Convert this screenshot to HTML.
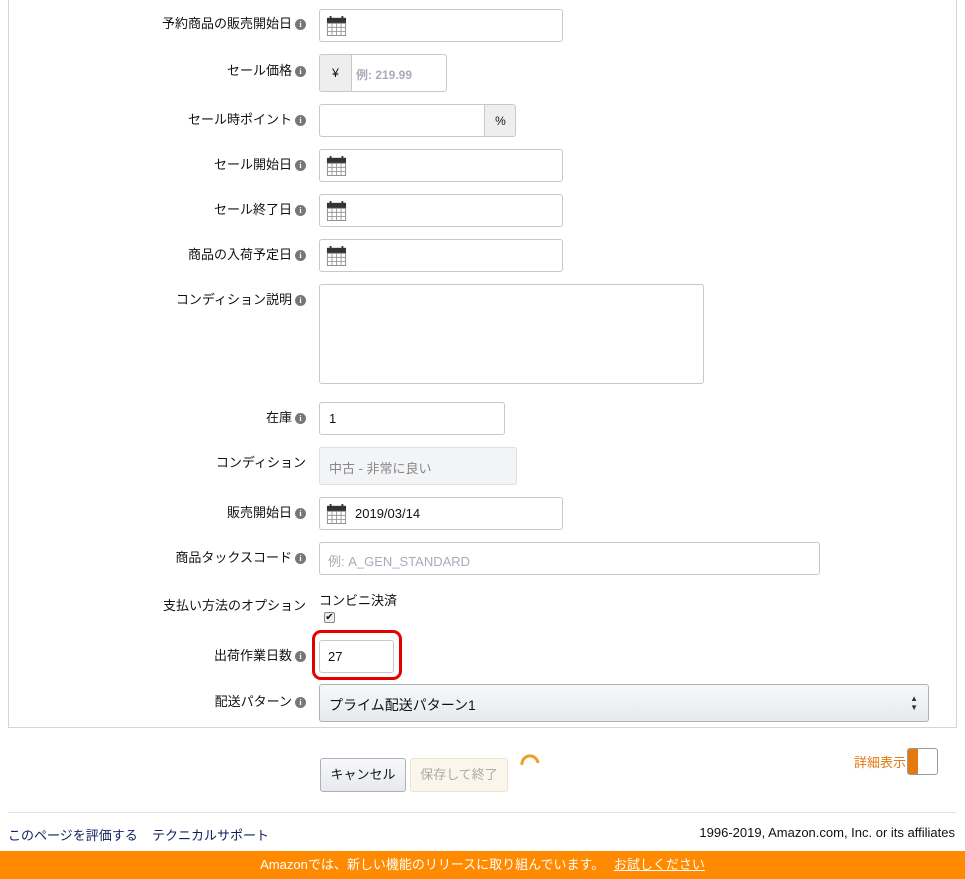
<!DOCTYPE html>
<html><head><meta charset="utf-8"><style>
*{box-sizing:border-box;margin:0;padding:0}
body{width:965px;height:879px;position:relative;background:#fff;font-family:"Liberation Sans","Noto Sans CJK JP",sans-serif;font-size:13px;color:#111;overflow:hidden}
.a{position:absolute}
.lbl{position:absolute;right:659px;text-align:right;white-space:nowrap;font-size:13px;color:#111;margin-top:-2px}
.lbl.i{right:673px}
.ic{position:absolute;width:11px;height:11px;border-radius:50%;background:#777;color:#fff;font:bold 8px/11px "Liberation Serif",serif;text-align:center;left:295px;margin-top:1px}
.in{position:absolute;border:1px solid #c8c8c8;border-radius:3px;background:#fff}
.cal{position:absolute;left:6px;top:6px;width:21px;height:20px}
.txt{position:absolute;font-size:13px}
</style></head><body>
<div class="a" style="left:8px;top:-2px;width:949px;height:730px;border:1px solid #d5d5d5;border-top:none"></div>

<svg width="0" height="0" style="position:absolute"><defs><g id="c"><rect x="0" y="0" width="21" height="6" fill="#333"/><rect x="3" y="-2" width="2" height="4" fill="#333"/><rect x="16" y="-2" width="2" height="4" fill="#333"/><rect x="0.5" y="6" width="20" height="13.5" fill="#fff" stroke="#888"/><path d="M5.5 6v14M10.5 6v14M15.5 6v14M0 10.5h21M0 15h21" stroke="#999" stroke-width="1"/></g></defs></svg>

<div class="lbl i" style="top:15px">予約商品の販売開始日</div><div class="ic" style="top:18px">i</div>
<div class="in" style="left:319px;top:9px;width:244px;height:33px"><svg class="cal" viewBox="0 -2 21 22"><use href="#c"/></svg></div>

<div class="lbl i" style="top:62px">セール価格</div><div class="ic" style="top:65px">i</div>
<div class="in" style="left:319px;top:54px;width:128px;height:38px;overflow:hidden"><div class="a" style="left:0;top:0;width:32px;height:38px;background:#eee;border-right:1px solid #c8c8c8;text-align:center;line-height:36px;font-size:12px">¥</div><div class="txt" style="left:36px;top:11px;color:#aab;font-weight:bold;font-size:12px">例: 219.99</div></div>

<div class="lbl i" style="top:111px">セール時ポイント</div><div class="ic" style="top:114px">i</div>
<div class="in" style="left:319px;top:104px;width:197px;height:33px;overflow:hidden"><div class="a" style="left:164px;top:0;width:32px;height:33px;background:#eee;border-left:1px solid #c8c8c8;text-align:center;line-height:32px;font-size:12px">%</div></div>

<div class="lbl i" style="top:156px">セール開始日</div><div class="ic" style="top:159px">i</div>
<div class="in" style="left:319px;top:149px;width:244px;height:33px"><svg class="cal" viewBox="0 -2 21 22"><use href="#c"/></svg></div>
<div class="lbl i" style="top:201px">セール終了日</div><div class="ic" style="top:204px">i</div>
<div class="in" style="left:319px;top:194px;width:244px;height:33px"><svg class="cal" viewBox="0 -2 21 22"><use href="#c"/></svg></div>
<div class="lbl i" style="top:246px">商品の入荷予定日</div><div class="ic" style="top:249px">i</div>
<div class="in" style="left:319px;top:239px;width:244px;height:33px"><svg class="cal" viewBox="0 -2 21 22"><use href="#c"/></svg></div>

<div class="lbl i" style="top:291px">コンディション説明</div><div class="ic" style="top:294px">i</div>
<div class="in" style="left:319px;top:284px;width:385px;height:100px"></div>

<div class="lbl i" style="top:409px">在庫</div><div class="ic" style="top:412px">i</div>
<div class="in" style="left:319px;top:402px;width:186px;height:33px"><div class="txt" style="left:9px;top:8px">1</div></div>

<div class="lbl" style="top:454px">コンディション</div>
<div class="in" style="left:319px;top:447px;width:198px;height:38px;background:#f3f4f6;border-color:#dde"><div class="txt" style="left:9px;top:10px;color:#888">中古 - 非常に良い</div></div>

<div class="lbl i" style="top:504px">販売開始日</div><div class="ic" style="top:507px">i</div>
<div class="in" style="left:319px;top:497px;width:244px;height:33px"><svg class="cal" viewBox="0 -2 21 22"><use href="#c"/></svg><div class="txt" style="left:35px;top:8px">2019/03/14</div></div>

<div class="lbl i" style="top:549px">商品タックスコード</div><div class="ic" style="top:552px">i</div>
<div class="in" style="left:319px;top:542px;width:501px;height:33px"><div class="txt" style="left:8px;top:8px;color:#aab">例: A_GEN_STANDARD</div></div>

<div class="lbl" style="top:597px">支払い方法のオプション</div>
<div class="txt" style="left:319px;top:590px">コンビニ決済</div>
<div class="a" style="left:324px;top:612px;width:11px;height:11px;border:1px solid #888;border-radius:2px;background:#eee;font-size:10px;line-height:9px;text-align:center">✔</div>

<div class="lbl i" style="top:647px">出荷作業日数</div><div class="ic" style="top:650px">i</div>
<div class="a" style="left:312px;top:630px;width:90px;height:50px;border:3px solid #e50000;border-radius:9px"></div>
<div class="in" style="left:319px;top:640px;width:75px;height:33px"><div class="txt" style="left:8px;top:8px">27</div></div>

<div class="lbl i" style="top:693px">配送パターン</div><div class="ic" style="top:696px">i</div>
<div class="in" style="left:319px;top:684px;width:610px;height:38px;background:linear-gradient(#f7f8fa,#e7e9ec);border-color:#adb1b8"><div class="txt" style="left:9px;top:10px;font-size:14px">プライム配送パターン1</div><div class="a" style="right:10px;top:9px;font-size:8px;line-height:9px;color:#333">▲<br>▼</div></div>

<div class="a" style="left:320px;top:758px;width:86px;height:34px;border:1px solid #adb1b8;border-radius:3px;background:linear-gradient(#f7f8fa,#e7e9ec);text-align:center;line-height:32px">キャンセル</div>
<div class="a" style="left:410px;top:758px;width:98px;height:34px;border:1px solid #eee3cf;border-radius:3px;background:#fbf6ec;text-align:center;line-height:32px;color:#aaa">保存して終了</div>
<svg class="a" style="left:518px;top:753px" width="24" height="24"><path d="M4 12 A8 8 0 0 1 20 10" stroke="#f0a020" stroke-width="3" fill="none"/></svg>

<div class="a" style="left:854px;top:752px;color:#e47911">詳細表示</div>
<div class="a" style="left:907px;top:748px;width:31px;height:27px;border:1px solid #999;border-radius:3px;background:#fff;overflow:hidden"><div style="width:10px;height:27px;background:#e47911"></div></div>

<div class="a" style="left:8px;top:812px;width:948px;height:1px;background:#e3e3e3"></div>
<div class="a" style="left:8px;top:825px;color:#0f1f5f">このページを評価する</div>
<div class="a" style="left:152px;top:825px;color:#0f1f5f">テクニカルサポート</div>
<div class="a" style="right:10px;top:825px;color:#111">1996-2019, Amazon.com, Inc. or its affiliates</div>

<div class="a" style="left:0;top:851px;width:965px;height:28px;background:#ff8a00;color:#fff;text-align:center;line-height:27px;font-size:13px">Amazonでは、新しい機能のリリースに取り組んでいます。 <span style="text-decoration:underline;margin-left:6px">お試しください</span></div>
</body></html>
